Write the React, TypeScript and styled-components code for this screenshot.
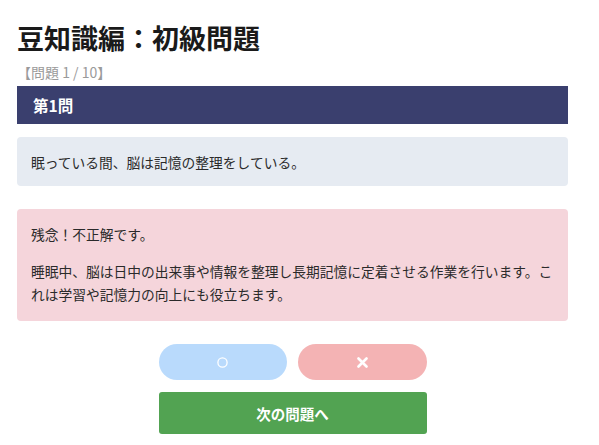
import styled, { createGlobalStyle } from "styled-components";

const GlobalStyle = createGlobalStyle`
    html, body {
        margin: 0;
        padding: 0;
        background: #ffffff;
    }
    body {
        font-family: "Noto Sans CJK JP", "Noto Sans", sans-serif;
        color: #222222;
    }
`;

const Page = styled.div`
    width: 551px;
    padding: 21px 0px 0px 17px;
    display: flex;
    flex-direction: column;
`;

const Title = styled.h1`
    margin: 0;
    font-size: 27px;
    line-height: 34px;
    font-weight: 700;
    color: #1a1a1a;
`;

const Counter = styled.div`
    margin-top: 8px;
    font-size: 14px;
    line-height: 18px;
    color: #9a9a9a;
`;

const QuestionBar = styled.div`
    margin-top: 5px;
    height: 38px;
    padding: 0px 16px;
    display: flex;
    align-items: center;
    background: #3a3f6e;
    color: #ffffff;
    font-size: 15.5px;
    font-weight: 700;
`;

const Box = styled.div<{ $tone: "info" | "wrong" }>`
    border-radius: 4px;
    background: ${({ $tone }) => ($tone === "info" ? "#e6ebf2" : "#f5d5db")};
    color: #2a2a2a;
    font-size: 13.75px;
`;

const QuestionBox = styled(Box)`
    margin-top: 13px;
    height: 49px;
    padding: 0px 14px;
    display: flex;
    align-items: center;
`;

const ResultBox = styled(Box)`
    margin-top: 23px;
    padding: 14px 14px 15px;
    line-height: 23px;

    p {
        margin: 0;
    }
    p + p {
        margin-top: 14px;
    }
`;

const Choices = styled.div`
    margin-top: 23px;
    align-self: center;
    width: 268px;
    display: grid;
    grid-template-columns: 1fr 1fr;
    gap: 12px 11px;
`;

const ChoiceBtn = styled.button<{ $kind: "maru" | "batsu" }>`
    height: 36px;
    border: none;
    border-radius: 18px;
    background: ${({ $kind }) => ($kind === "maru" ? "#b9dafc" : "#f4b3b4")};
    color: #ffffff;
    font-family: inherit;
    font-size: 15px;
    font-weight: 700;
    display: flex;
    align-items: center;
    justify-content: center;
    padding: 0;
`;

const NextBtn = styled.button`
    grid-column: 1 / span 2;
    height: 42px;
    border: none;
    border-radius: 3px;
    background: #52a352;
    color: #ffffff;
    font-family: inherit;
    font-size: 14.5px;
    font-weight: 700;
`;

export default function App() {
    return (
        <>
            <GlobalStyle />
            <Page>
                <Title>豆知識編：初級問題</Title>
                <Counter>【問題 1 / 10】</Counter>
                <QuestionBar>第1問</QuestionBar>
                <QuestionBox $tone="info">眠っている間、脳は記憶の整理をしている。</QuestionBox>
                <ResultBox $tone="wrong">
                    <p>残念！不正解です。</p>
                    <p>睡眠中、脳は日中の出来事や情報を整理し長期記憶に定着させる作業を行います。これは学習や記憶力の向上にも役立ちます。</p>
                </ResultBox>
                <Choices>
                    <ChoiceBtn $kind="maru">
                        <svg width="11" height="11" viewBox="0 0 11 11">
                            <circle cx="5.5" cy="5.5" r="4.6" fill="none" stroke="#ffffff" strokeWidth="1.3" />
                        </svg>
                    </ChoiceBtn>
                    <ChoiceBtn $kind="batsu">
                        <svg width="11" height="11" viewBox="0 0 11 11">
                            <path d="M1.5 1.5 L9.5 9.5 M9.5 1.5 L1.5 9.5" stroke="#ffffff" strokeWidth="2.6" strokeLinecap="round" />
                        </svg>
                    </ChoiceBtn>
                    <NextBtn>次の問題へ</NextBtn>
                </Choices>
            </Page>
        </>
    );
}
